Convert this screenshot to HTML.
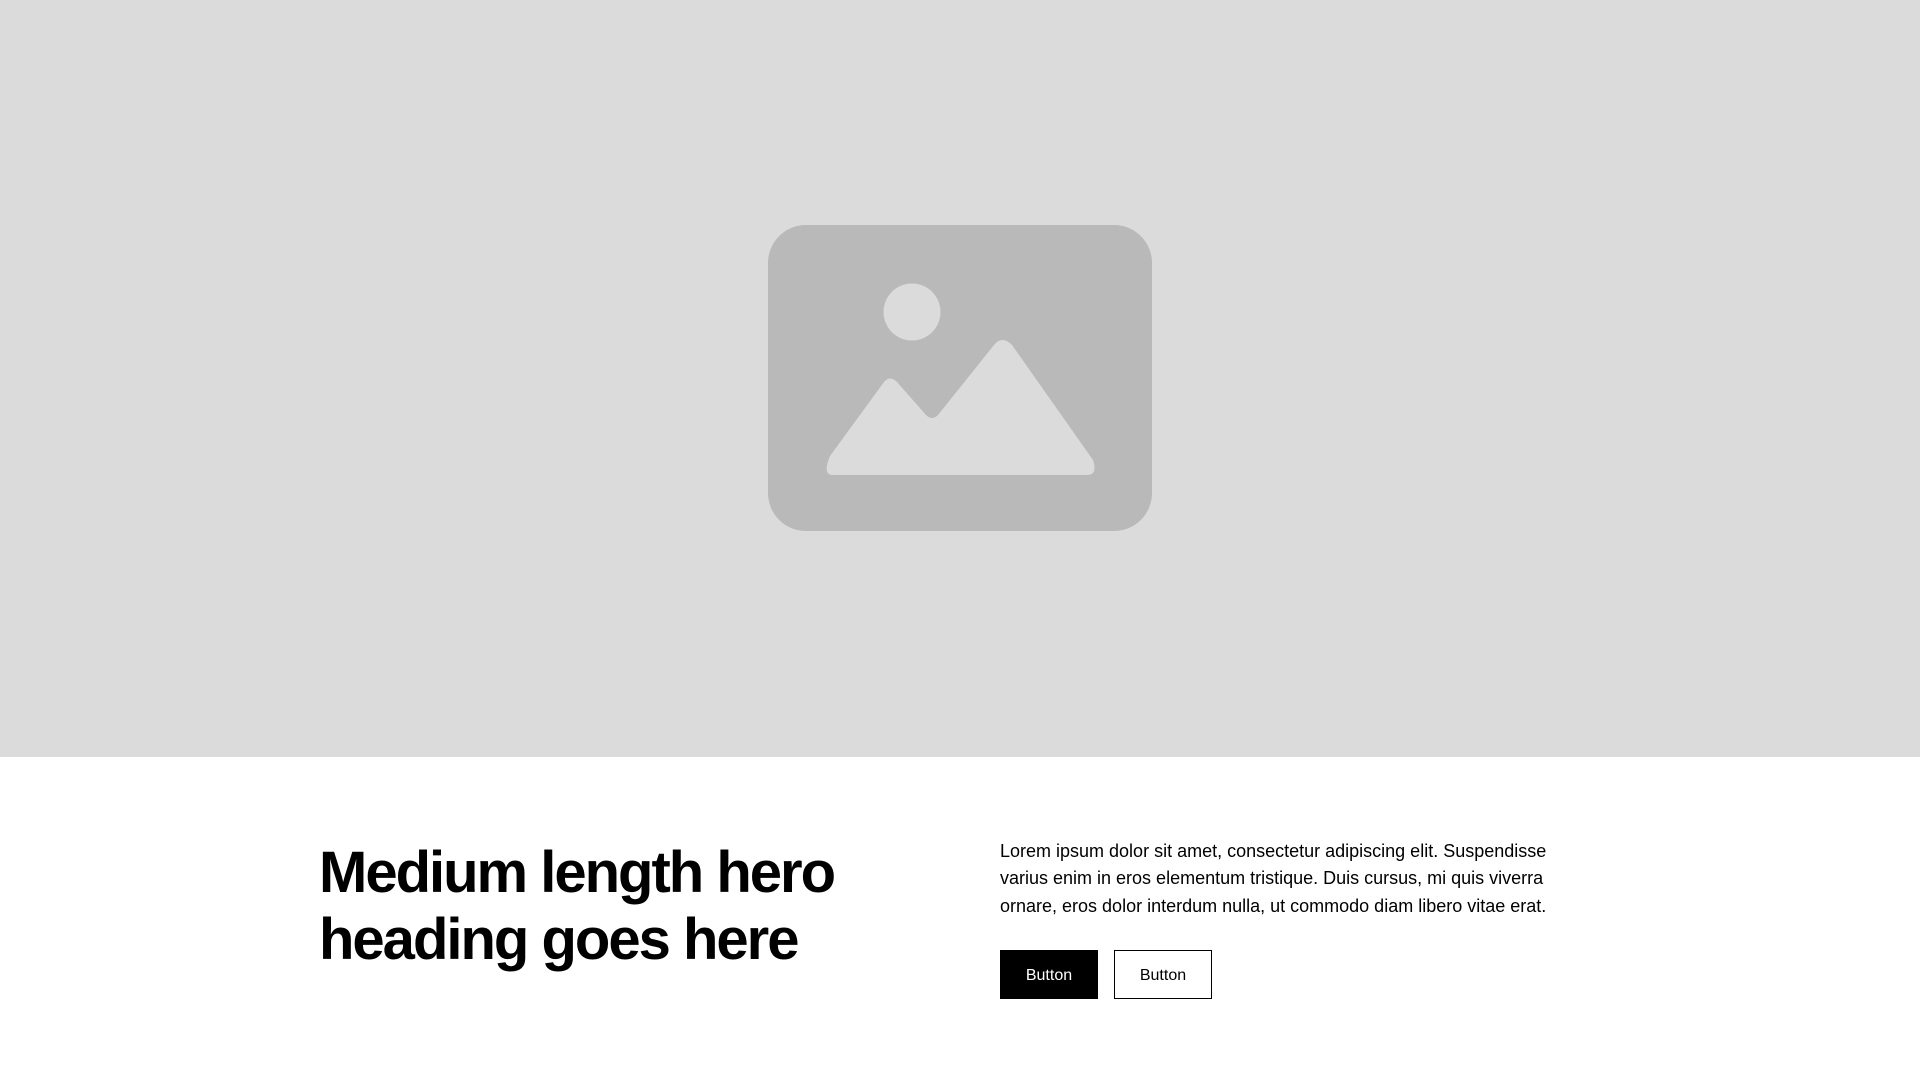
<!DOCTYPE html>
<html><head><meta charset="utf-8"><style>
html,body{margin:0;padding:0;width:1920px;height:1080px;overflow:hidden;background:#fff;font-family:"Liberation Sans",Arial,sans-serif;color:#000}
.hero{position:absolute;left:0;top:0;width:1920px;height:757px;background:#dbdbdb}
h1{position:absolute;left:319px;top:839px;margin:0;font-size:58px;line-height:67px;font-weight:700;letter-spacing:-2px;width:700px;white-space:nowrap}
p{position:absolute;left:1000px;top:838px;margin:0;font-size:18px;line-height:27.4px;width:580px}
.b{position:absolute;top:950px;height:49px;width:98px;box-sizing:border-box;font-size:16px;line-height:49px;text-align:center;border:1px solid #000}
.b1{left:1000px;background:#000;color:#fff}
.b2{left:1114px;background:#fff;color:#000}
</style></head><body>
<div class="hero"><svg width="1920" height="757" viewBox="0 0 1920 757">
<rect x="768" y="225" width="384" height="306" rx="38" fill="#b9b9b9"/>
<circle cx="912" cy="312" r="28.5" fill="#dbdbdb"/>
<path d="M833,475 H1087 Q1098,475 1093,460 L1012,345 Q1002,335 994,345 L938,415 Q932,421 926,415 L897,382 Q890,375 884,382 L830,456 Q822,475 833,475 Z" fill="#dbdbdb"/>
</svg></div>
<h1>Medium length hero<br>heading goes here</h1>
<p>Lorem ipsum dolor sit amet, consectetur adipiscing elit. Suspendisse varius enim in eros elementum tristique. Duis cursus, mi quis viverra ornare, eros dolor interdum nulla, ut commodo diam libero vitae erat.</p>
<div class="b b1">Button</div>
<div class="b b2">Button</div>
</body></html>
